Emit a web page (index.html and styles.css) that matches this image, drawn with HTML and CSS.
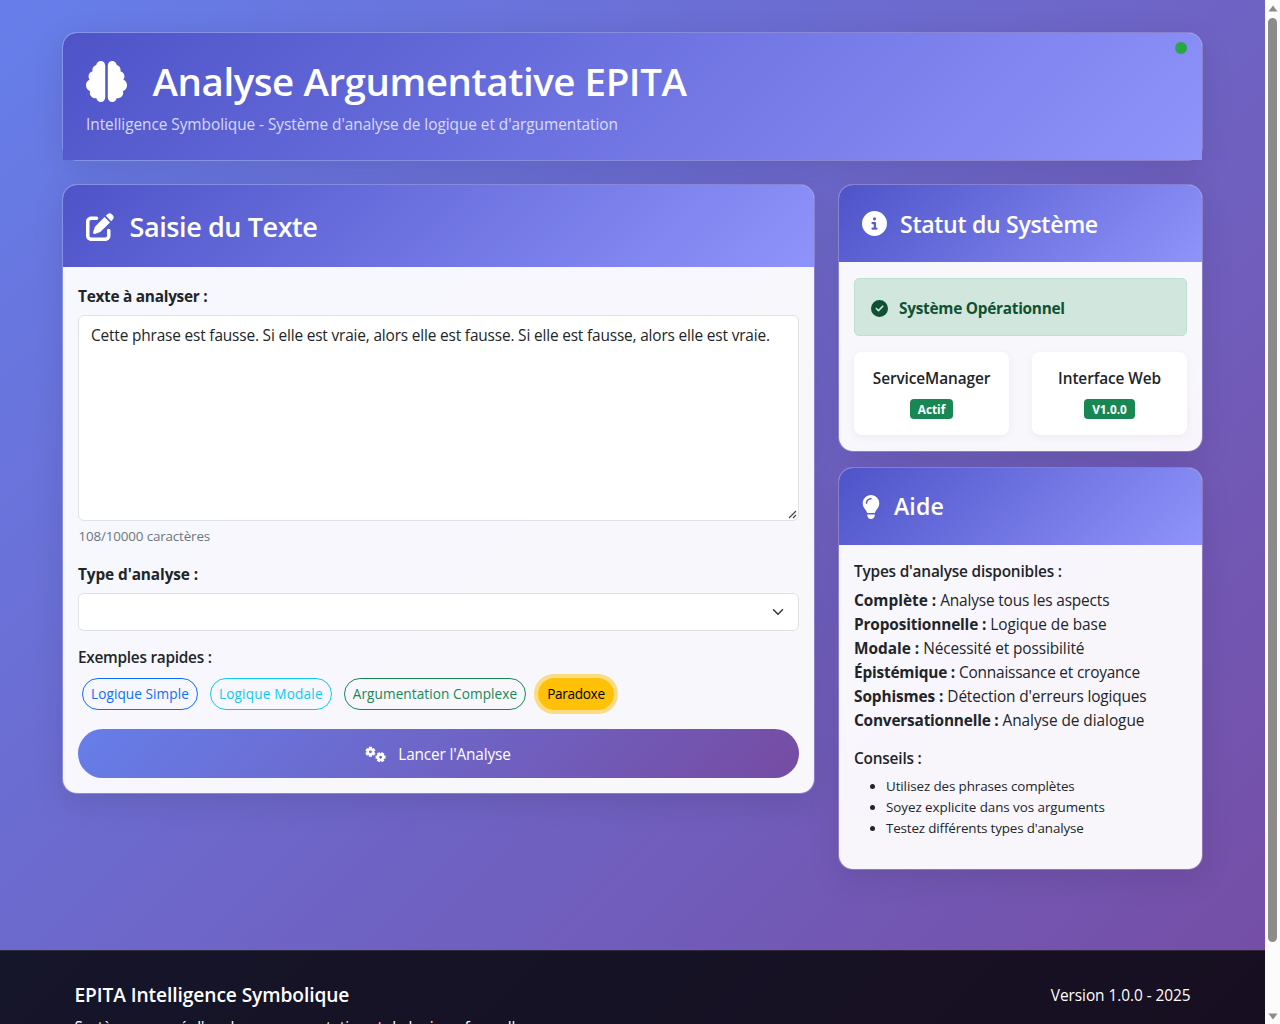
FILE: index.html
```html
<!DOCTYPE html>
<html lang="fr">
<head>
<meta charset="utf-8">
<title>Analyse Argumentative EPITA</title>
<link rel="stylesheet" href="styles.css">
</head>
<body>
<div class="viewport">
<div class="page">
  <main class="container">
    <header class="card hero">
      <div class="card-header">
        <h1><svg class="icon" width="41" height="41" viewBox="0 0 512 512"><path d="M184 0c30.9 0 56 25.1 56 56V456c0 30.9-25.1 56-56 56c-28.9 0-52.7-21.9-55.7-50.1c-5.2 1.4-10.7 2.1-16.3 2.1c-35.3 0-64-28.7-64-64c0-7.4 1.3-14.6 3.6-21.2C21.4 367.4 0 338.2 0 304c0-31.9 18.7-59.5 45.8-72.3C37.1 220.8 32 207 32 192c0-30.7 21.6-56.3 50.4-62.6C80.8 123.9 80 118 80 112c0-29.9 20.6-55.1 48.3-62.1C131.3 21.9 155.1 0 184 0zM328 0c28.9 0 52.6 21.9 55.7 49.9c27.8 7 48.3 32.1 48.3 62.1c0 6-.8 11.9-2.4 17.4c28.8 6.2 50.4 31.9 50.4 62.6c0 15-5.1 28.8-13.8 39.7C493.3 244.5 512 272.1 512 304c0 34.2-21.4 63.4-51.6 74.8c2.3 6.6 3.6 13.8 3.6 21.2c0 35.3-28.7 64-64 64c-5.6 0-11.1-.7-16.3-2.1c-3 28.2-26.8 50.1-55.7 50.1c-30.9 0-56-25.1-56-56V56c0-30.9 25.1-56 56-56z"/></svg><span>Analyse Argumentative EPITA</span></h1>
        <p class="subtitle t1">Intelligence Symbolique - Système d'analyse de logique et d'argumentation</p>
      </div>
      <span class="status-dot"></span>
    </header>
    <div class="columns">
      <section class="card">
        <div class="card-header">
          <h3><svg class="icon" width="28" height="28" viewBox="0 0 512 512"><path d="M471.6 21.7c-21.9-21.9-57.3-21.9-79.2 0L362.3 51.7l97.9 97.9 30.1-30.1c21.9-21.9 21.9-57.3 0-79.2L471.6 21.7zm-299.2 220c-6.1 6.1-10.8 13.6-13.5 21.9l-29.6 88.8c-2.9 8.6-.6 18.1 5.8 24.6s15.9 8.7 24.6 5.8l88.8-29.6c8.2-2.7 15.7-7.4 21.9-13.5L437.7 172.3 339.7 74.3 172.4 241.7zM96 64C43 64 0 107 0 160V416c0 53 43 96 96 96H352c53 0 96-43 96-96V320c0-17.7-14.3-32-32-32s-32 14.3-32 32v96c0 17.7-14.3 32-32 32H96c-17.7 0-32-14.3-32-32V160c0-17.7 14.3-32 32-32h96c17.7 0 32-14.3 32-32s-14.3-32-32-32H96z"/></svg><span>Saisie du Texte</span></h3>
        </div>
        <div class="card-body">
          <div class="label t5">Texte à analyser :</div>
          <div class="textarea">Cette phrase est fausse. Si elle est vraie, alors elle est fausse. Si elle est fausse, alors elle est vraie.
            <svg class="grip" width="9" height="9" viewBox="0 0 9 9"><path d="M1 8L8 1M5 8L8 5"/></svg>
          </div>
          <div class="counter t3">108/10000 caractères</div>
          <div class="label t2">Type d'analyse :</div>
          <div class="select"><svg width="12" height="12" viewBox="0 0 16 16"><path d="m2 5 6 6 6-6"/></svg></div>
          <h6 class="t5">Exemples rapides :</h6>
          <div class="pills">
            <button class="pill blue">Logique Simple</button>
            <button class="pill cyan">Logique Modale</button>
            <button class="pill green">Argumentation Complexe</button>
            <button class="pill yellow">Paradoxe</button>
          </div>
          <button class="submit t3"><svg width="21" height="17" viewBox="0 0 640 512">
            <g transform="translate(165 174)"><circle r="79"/><path d="M0-95V-152M0 95V152M82-47.5L132-76M-82 47.5L-132 76M82 47.5L132 76M-82-47.5L-132-76"/></g>
            <g transform="translate(475 338) rotate(30)"><circle r="79"/><path d="M0-95V-152M0 95V152M82-47.5L132-76M-82 47.5L-132 76M82 47.5L132 76M-82-47.5L-132-76"/></g>
          </svg>Lancer l'Analyse</button>
        </div>
      </section>
      <aside class="side">
        <section class="card">
          <div class="card-header">
            <h4><svg class="icon" width="25" height="25" viewBox="0 0 512 512"><path d="M256 512A256 256 0 1 0 256 0a256 256 0 1 0 0 512zM216 336h24V272H216c-13.3 0-24-10.7-24-24s10.7-24 24-24h48c13.3 0 24 10.7 24 24v88h8c13.3 0 24 10.7 24 24s-10.7 24-24 24H216c-13.3 0-24-10.7-24-24s10.7-24 24-24zm40-208a32 32 0 1 1 0 64 32 32 0 1 1 0-64z"/></svg><span>Statut du Système</span></h4>
          </div>
          <div class="card-body status">
            <div class="alert t5"><svg width="17" height="17" viewBox="0 0 512 512"><path d="M256 512A256 256 0 1 0 256 0a256 256 0 1 0 0 512zM369 209L241 337c-9.4 9.4-24.6 9.4-33.9 0l-64-64c-9.4-9.4-9.4-24.6 0-33.9s24.6-9.4 33.9 0l47 47L335 175c9.4-9.4 24.6-9.4 33.9 0s9.4 24.6 0 33.9z"/></svg><span>Système Opérationnel</span></div>
            <div class="services">
              <div class="service"><h6 class="t2">ServiceManager</h6><span class="badge">Actif</span></div>
              <div class="service"><h6 class="t2">Interface Web</h6><span class="badge">V1.0.0</span></div>
            </div>
          </div>
        </section>
        <section class="card">
          <div class="card-header">
            <h4><svg class="icon" width="18" height="24" viewBox="0 0 384 512"><path d="M272 384c9.6-31.9 29.5-59.1 49.2-86.2l0 0c5.2-7.1 10.4-14.2 15.4-21.4c19.8-28.5 31.4-63 31.4-100.3C368 78.8 289.2 0 192 0S16 78.8 16 176c0 37.3 11.6 71.9 31.4 100.3c5 7.2 10.2 14.3 15.4 21.4l0 0c19.8 27.1 39.7 54.4 49.2 86.2H272zM192 512c44.2 0 80-35.8 80-80V416H112v16c0 44.2 35.8 80 80 80zM112 176c0 8.8-7.2 16-16 16s-16-7.2-16-16c0-61.9 50.1-112 112-112c8.8 0 16 7.2 16 16s-7.2 16-16 16c-44.2 0-80 35.8-80 80z"/></svg><span class="aide">Aide</span></h4>
          </div>
          <div class="card-body help">
            <h6 class="t4">Types d'analyse disponibles :</h6>
            <ul class="types">
              <li><strong>Complète :</strong> <span class="t3">Analyse tous les aspects</span></li>
              <li><strong class="t3">Propositionnelle :</strong> <span class="t1">Logique de base</span></li>
              <li><strong>Modale :</strong> <span class="t2">Nécessité et possibilité</span></li>
              <li><strong class="t4">Épistémique :</strong> <span class="t4">Connaissance et croyance</span></li>
              <li><strong class="t2">Sophismes :</strong> <span class="t3">Détection d'erreurs logiques</span></li>
              <li><strong class="t4">Conversationnelle :</strong> <span class="t1">Analyse de dialogue</span></li>
            </ul>
            <h6 class="t4">Conseils :</h6>
            <ul class="tips">
              <li class="t2">Utilisez des phrases complètes</li>
              <li class="t1">Soyez explicite dans vos arguments</li>
              <li class="t3">Testez différents types d'analyse</li>
            </ul>
          </div>
        </section>
      </aside>
    </div>
  </main>
  <footer class="footer">
    <div><h5 class="t2">EPITA Intelligence Symbolique</h5><p class="t2">Système avancé d'analyse argumentative et de logique formelle</p></div>
    <p class="version t1">Version 1.0.0 - 2025</p>
  </footer>
</div>
<div class="scrollbar">
  <svg width="10" height="7" viewBox="0 0 10 7"><path d="M5 .5L9.5 6.5H.5z"/></svg>
  <div class="thumb"></div>
  <svg width="10" height="7" viewBox="0 0 10 7"><path d="M5 6.5L9.5 .5H.5z"/></svg>
</div>
</div>
</body>
</html>
```
FILE: styles.css
```css
*{box-sizing:border-box}
body{margin:0;font:15.4px/24px "Open Sans","Noto Sans",sans-serif;color:#212529;overflow:hidden}
h1,h3,h4,h5,h6,p,ul{margin:0;padding:0}
button{font-family:inherit}

/* tracking steps */
.t1{letter-spacing:-.05px}
.t2{letter-spacing:-.1px}
.t3{letter-spacing:-.15px}
.t4{letter-spacing:-.2px}
.t5{letter-spacing:-.27px}

.viewport{display:flex;height:1024px;overflow:hidden}
.page{width:1265px;height:1097px;flex:none;background:linear-gradient(135deg,#667eea 0%,#764ba2 100%)}
.container{width:1141px;margin:0 0 0 62px;padding-top:32px;height:950px}

.scrollbar{width:15px;background:#fcfcfc;display:flex;flex-direction:column;align-items:center;padding:5px 0 4px}
.scrollbar svg{fill:#8b8b8b;flex:none}
.thumb{width:9px;height:924px;border-radius:5px;background:#8b8b8b;margin:6px 0 auto}

.card{position:relative;background:rgba(255,255,255,.95);background-clip:padding-box;border:1px solid rgba(255,255,255,.2);border-radius:15px;box-shadow:0 8px 32px rgba(0,0,0,.1)}
.card-header{padding:24px 23px;border-radius:14px 14px 0 0;background:linear-gradient(135deg,#4e54c8,#8f94fb);color:#fff}
.card-header h1,.card-header h3,.card-header h4{display:flex;align-items:center;font-weight:600}
h1{font-size:38.5px;height:48px;line-height:48px;letter-spacing:-.45px;gap:26px;margin-bottom:8px}
h3{font-size:27px;height:34px;line-height:34px;letter-spacing:-.41px;gap:16px}
h4{font-size:23.1px;height:29px;line-height:29px;letter-spacing:-.32px;gap:13.5px}
h3 span{padding-top:2px}
h4 span{padding-top:2px}
h4 .aide{letter-spacing:.1px;margin-left:1px;padding-top:0}
.icon{fill:currentColor;flex:none;margin-left:-.5px}
h1 .icon{margin-top:1px}
h3 .icon{margin-top:1px}
h6{font-size:15.4px;line-height:19px;font-weight:600}

.hero{height:129px;margin-bottom:23px}
.hero .card-header{height:127px;padding-top:23.5px}
.subtitle{opacity:.75}
.status-dot{position:absolute;top:9px;right:15px;width:12px;height:12px;border-radius:50%;background:#28a745}

.columns{display:grid;grid-template-columns:753px 365px;gap:23px;align-items:start}
.side{display:grid;gap:15px}
.card-body{padding:18px 15px 15px}

.label{font-weight:700;margin-bottom:6px}
.textarea{position:relative;height:206px;background:#fff;border:1px solid #dee2e6;border-radius:6px;padding:8px 12px;white-space:nowrap;letter-spacing:-.16px}
.grip{position:absolute;right:1px;bottom:1px;stroke:#444;stroke-width:1.2;fill:none}
.counter{font-size:13.4px;color:#6c757d;margin:3px 0 15px;padding-left:.5px}
.select{height:38px;background:#fff;border:1px solid #dee2e6;border-radius:6px;margin-bottom:17px;display:flex;align-items:center;justify-content:flex-end;padding-right:14px}
.select svg{fill:none;stroke:#343a40;stroke-width:2;stroke-linecap:round;stroke-linejoin:round}

.pills{display:flex;padding:0 4px;gap:12px;margin:11px 0 19px}
.pill{height:32px;font-size:13.6px;line-height:21px;padding:0 8px 1px;border:1px solid;border-radius:20px;background:none;letter-spacing:.08px;white-space:nowrap}
.blue{color:#0d6efd}
.cyan{color:#0dcaf0;letter-spacing:.19px}
.green{color:#198754}
.yellow{color:#000;background:#ffc107;border-color:#ffc107;box-shadow:0 0 0 4px rgba(255,193,7,.5);letter-spacing:-.32px}

.submit{display:flex;align-items:center;justify-content:center;gap:12px;width:100%;height:49px;border:0;padding:2px 1px 0 0;font-size:15.4px;color:#fff;border-radius:25px;background:linear-gradient(135deg,#667eea,#764ba2)}
.submit svg{fill:none;stroke:#fff;stroke-width:72}
.submit svg path{stroke-width:96}

.status{padding:16px 15px}
.alert{display:flex;align-items:center;gap:11px;height:58px;margin-bottom:16px;padding:2px 16px 0;background:#d1e7dd;border:1px solid #c1dfd0;border-radius:5px;color:#0f5132;font-weight:700}
.alert span{padding-top:1px}
.alert svg{fill:currentColor}
.services{display:grid;grid-template-columns:155px 155px;justify-content:space-between}
.service{height:83px;padding-top:17px;display:flex;flex-direction:column;align-items:center;gap:11px;background:#fff;border-radius:8px;box-shadow:0 2px 10px rgba(0,0,0,.05)}
.badge{height:20px;padding:0 7.8px;border-radius:4px;background:#198754;color:#fff;font-size:11.8px;line-height:21px;font-weight:700}

.help{height:324px;padding-top:17px}
.types{list-style:none;margin:8px 0 16px}
.tips{font-size:13.4px;line-height:21px;padding-left:32px;margin-top:8px}

.footer{background:rgba(0,0,0,.8);border-top:1px solid rgba(255,255,255,.1);color:#fff;padding:32px 74.5px;display:flex;justify-content:space-between;height:147px}
.version{padding-top:1px}
h5{font-size:19.2px;font-weight:600;line-height:24px;margin-bottom:9px}
```
